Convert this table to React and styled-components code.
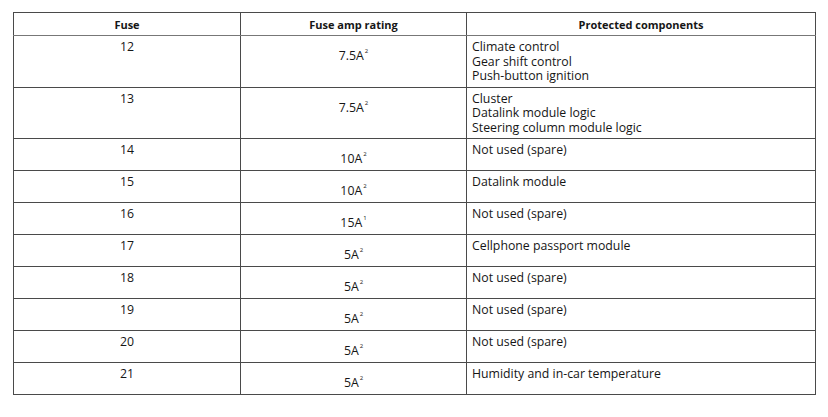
import React from "react";
import styled, { createGlobalStyle } from "styled-components";

const GlobalStyle = createGlobalStyle`
  html, body {
    margin: 0;
    background: #ffffff;
  }
  body {
    font-family: "Open Sans", "Liberation Sans", sans-serif;
    color: #161616;
  }
`;

const rows = [
  { fuse: "12", amp: "7.5A", note: "2", parts: ["Climate control", "Gear shift control", "Push-button ignition"] },
  { fuse: "13", amp: "7.5A", note: "2", parts: ["Cluster", "Datalink module logic", "Steering column module logic"] },
  { fuse: "14", amp: "10A", note: "2", parts: ["Not used (spare)"] },
  { fuse: "15", amp: "10A", note: "2", parts: ["Datalink module"] },
  { fuse: "16", amp: "15A", note: "1", parts: ["Not used (spare)"] },
  { fuse: "17", amp: "5A", note: "2", parts: ["Cellphone passport module"] },
  { fuse: "18", amp: "5A", note: "2", parts: ["Not used (spare)"] },
  { fuse: "19", amp: "5A", note: "2", parts: ["Not used (spare)"] },
  { fuse: "20", amp: "5A", note: "2", parts: ["Not used (spare)"] },
  { fuse: "21", amp: "5A", note: "2", parts: ["Humidity and in-car temperature"] },
];

const Page = styled.div`
  padding: 12px 0 0 13px;
`;

const Table = styled.table`
  border-collapse: collapse;
  table-layout: fixed;
  width: 802px;
  border: 1px solid #4a4a4a;
`;

const HeadCell = styled.th`
  height: 22px;
  padding: 0 5px;
  font-size: 11px;
  font-weight: 700;
  text-align: center;
  vertical-align: middle;
  border-left: 1px solid #4a4a4a;
  border-bottom: 1px solid #777;
`;

const Row = styled.tr`
  height: 32px;
  border-bottom: 1px solid #4a4a4a;
`;

const Cell = styled.td`
  padding: ${(p) => (p.$amp ? "13px 5px 0" : "4px 5px 3px")};
  font-size: 12.3px;
  line-height: 14.5px;
  text-align: ${(p) => (p.$left ? "left" : "center")};
  vertical-align: top;
  border-left: 1px solid #4a4a4a;
`;

const Note = styled.sup`
  font-size: 6px;
  line-height: 0;
  vertical-align: 7px;
  margin-left: 1px;
`;

const Line = styled.div`
  white-space: nowrap;
`;

export default function App() {
  return (
    <>
      <GlobalStyle />
      <Page>
        <Table>
          <colgroup>
            <col style={{ width: 227 }} />
            <col style={{ width: 226 }} />
            <col style={{ width: 349 }} />
          </colgroup>
          <thead>
            <tr>
              <HeadCell>Fuse</HeadCell>
              <HeadCell>Fuse amp rating</HeadCell>
              <HeadCell>Protected components</HeadCell>
            </tr>
          </thead>
          <tbody>
            {rows.map((r) => (
              <Row key={r.fuse}>
                <Cell>{r.fuse}</Cell>
                <Cell $amp>
                  {r.amp}
                  <Note>{r.note}</Note>
                </Cell>
                <Cell $left>
                  {r.parts.map((p) => (
                    <Line key={p}>{p}</Line>
                  ))}
                </Cell>
              </Row>
            ))}
          </tbody>
        </Table>
      </Page>
    </>
  );
}
